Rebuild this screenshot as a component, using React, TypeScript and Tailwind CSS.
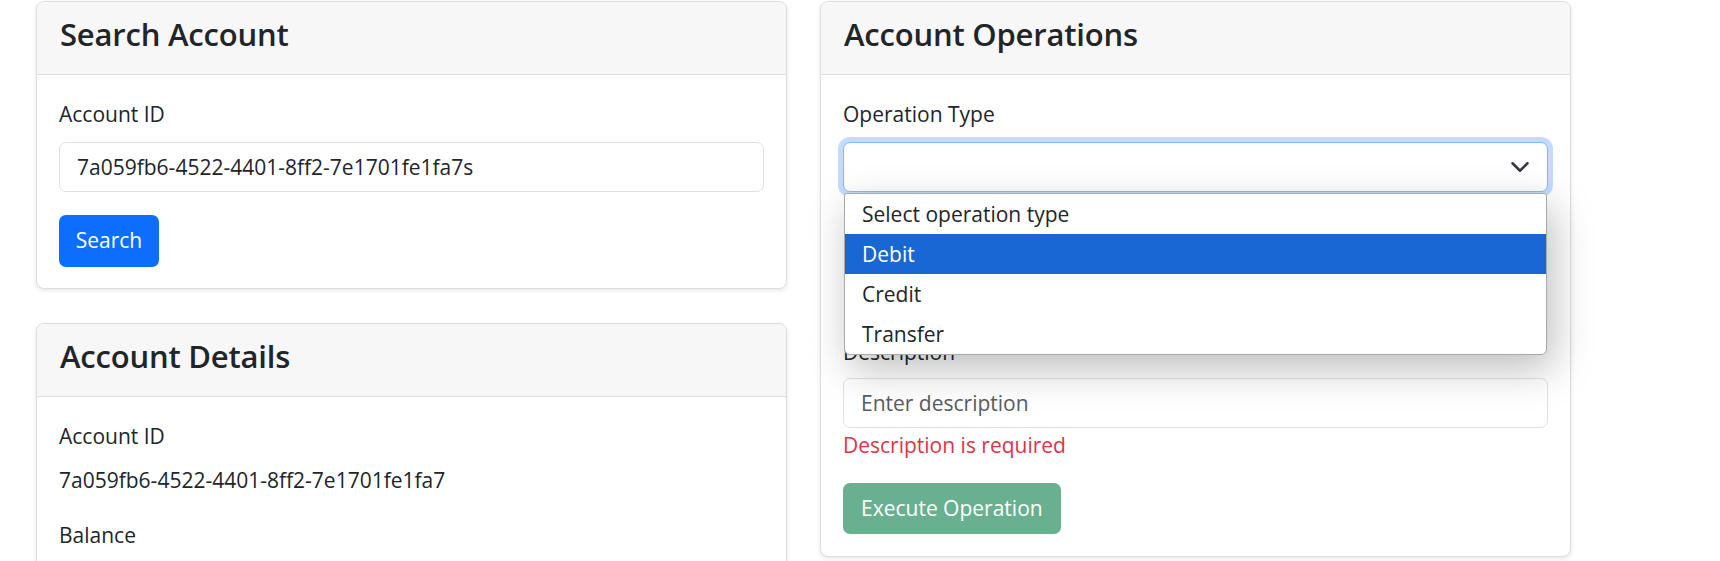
import React from 'react';

const Card = ({ title, children, className = '' }: { title: string; children: React.ReactNode; className?: string }) => {
  return (
    <div className={`bg-white border border-[#dcdddf] rounded-[8px] shadow-[0_2px_5px_rgba(0,0,0,0.09)] ${className}`}>
      <div className="h-[73px] px-[23px] flex items-center bg-[#f7f7f8] border-b border-[#dcdddf] rounded-t-[8px]">
        <h3 className="text-[31px] font-semibold leading-none pb-[8px] tracking-[-0.2px]">{title}</h3>
      </div>
      {children}
    </div>
  );
};

const options = ['Select operation type', 'Debit', 'Credit', 'Transfer'];

export default function App() {
  return (
    <div className="min-h-screen bg-white text-[#212529] font-['Open_Sans',sans-serif] text-[21px] flex gap-[33px] pl-[36px] pt-[1px]">
      {/* Left column */}
      <div className="w-[751px] flex flex-col gap-[34px]">
        <Card title="Search Account">
          <div className="px-[22px] pt-[24px] pb-[21px]">
            <label className="block leading-[30px] mb-[13px]">Account ID</label>
            <input
              readOnly
              value="7a059fb6-4522-4401-8ff2-7e1701fe1fa7s"
              className="block w-full h-[50px] border border-[#dee2e6] rounded-[7px] px-[17px] text-[21px] text-[#212529] outline-none"
            />
            <button className="mt-[23px] h-[52px] w-[100px] rounded-[7px] bg-[#0d6efd] text-white text-[21px]">
              Search
            </button>
          </div>
        </Card>

        <Card title="Account Details">
          <div className="px-[22px] pt-[24px] pb-[22px]">
            <div className="leading-[30px]">Account ID</div>
            <div className="leading-[30px] mt-[14px]">7a059fb6-4522-4401-8ff2-7e1701fe1fa7</div>
            <div className="leading-[30px] mt-[25px]">Balance</div>
            <div className="leading-[30px] mt-[14px]">1500.00</div>
          </div>
        </Card>
      </div>

      {/* Right column */}
      <div className="w-[751px]">
        <Card title="Account Operations">
          <div className="px-[22px] pt-[24px] pb-[22px]">
            <label className="block leading-[30px] mb-[13px]">Operation Type</label>
            <div className="relative z-10">
              <div className="h-[50px] border border-[#86b7fe] rounded-[7px] bg-white shadow-[0_0_0_5px_rgba(13,110,253,0.25)]" />
              <svg
                className="absolute right-[18px] top-1/2 -translate-y-1/2 w-[20px] h-[20px]"
                viewBox="0 0 16 16"
                fill="none"
                stroke="#343a40"
                strokeWidth={2}
                strokeLinecap="round"
                strokeLinejoin="round"
              >
                <path d="m2 5 6 6 6-6" />
              </svg>

              {/* Open dropdown list */}
              <div className="absolute left-[1px] right-[1px] top-[51px] bg-white border border-[#a9a9a9] rounded-b-[6px] rounded-t-[3px] shadow-[6px_14px_40px_rgba(0,0,0,0.26)] overflow-hidden">
                {options.map((opt) => (
                  <div
                    key={opt}
                    className={`h-[40px] px-[17px] pt-[2px] flex items-center ${opt === 'Debit' ? 'bg-[#1967d2] text-white' : 'text-[#212529]'}`}
                  >
                    {opt}
                  </div>
                ))}
              </div>
            </div>

            {/* hidden behind the open list */}
            <div className="h-[145px]" />

            <label className="block leading-[30px] mb-[11px]">Description</label>
            <input
              readOnly
              placeholder="Enter description"
              className="block w-full h-[50px] border border-[#dee2e6] rounded-[7px] px-[17px] text-[21px] outline-none placeholder:text-[#595c5f]"
            />
            <div className="mt-[2px] leading-[30px] text-[#dc3545]">Description is required</div>
            <button className="mt-[23px] h-[51px] px-[18px] rounded-[7px] bg-[#198754] opacity-65 text-white text-[21px]">
              Execute Operation
            </button>
          </div>
        </Card>
      </div>
    </div>
  );
}
